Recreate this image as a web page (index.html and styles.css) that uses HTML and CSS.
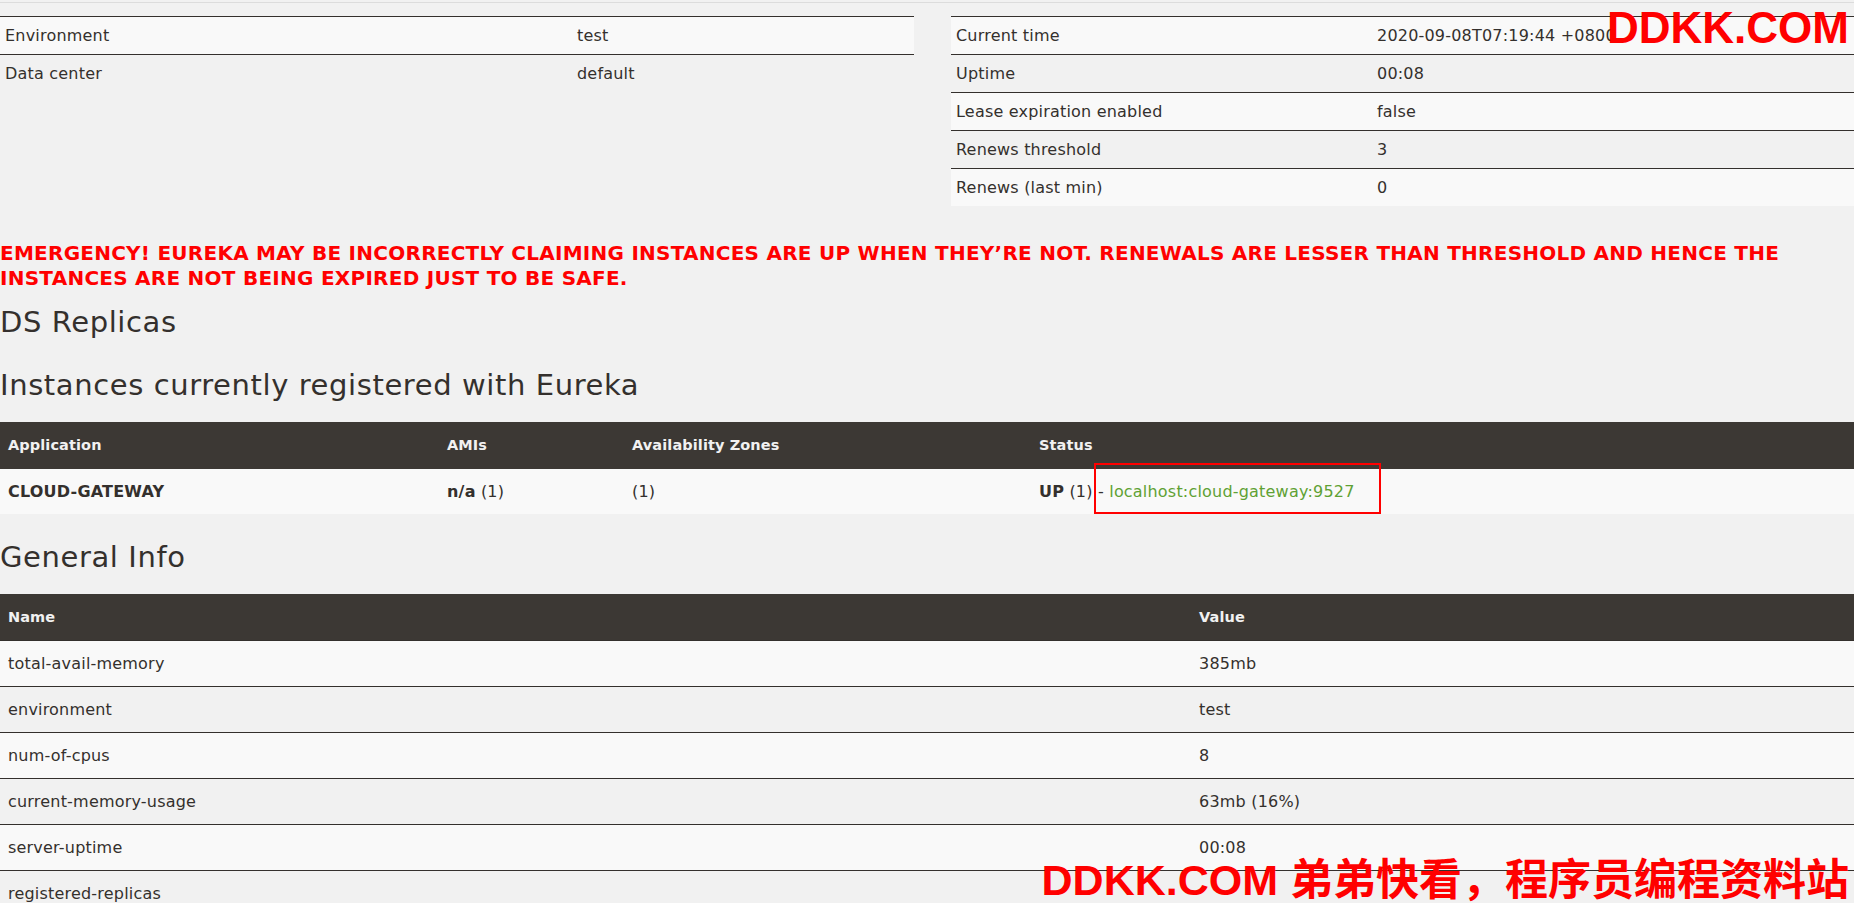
FILE: index.html
```html
<!DOCTYPE html>
<html lang="en">
<head>
<meta charset="utf-8">
<title>Eureka</title>
<link rel="stylesheet" href="styles.css">
</head>
<body>
<div class="page">
  <div class="topline"></div>
  <div class="sys-row">
    <table class="sys sys-left">
      <tr><td>Environment</td><td>test</td></tr>
      <tr><td>Data center</td><td>default</td></tr>
    </table>
    <table class="sys sys-right">
      <tr><td>Current time</td><td>2020-09-08T07:19:44 +0800</td></tr>
      <tr><td>Uptime</td><td>00:08</td></tr>
      <tr><td>Lease expiration enabled</td><td>false</td></tr>
      <tr><td>Renews threshold</td><td>3</td></tr>
      <tr><td>Renews (last min)</td><td>0</td></tr>
    </table>
  </div>

  <h4 class="emergency">EMERGENCY! EUREKA MAY BE INCORRECTLY CLAIMING INSTANCES ARE UP WHEN THEY’RE NOT. RENEWALS ARE LESSER THAN THRESHOLD AND HENCE THE INSTANCES ARE NOT BEING EXPIRED JUST TO BE SAFE.</h4>

  <h1>DS Replicas</h1>
  <ul class="list-group"></ul>

  <h1>Instances currently registered with Eureka</h1>
  <table class="grid instances">
    <thead>
      <tr><th class="c-app">Application</th><th class="c-ami">AMIs</th><th class="c-az">Availability Zones</th><th>Status</th></tr>
    </thead>
    <tbody>
      <tr>
        <td><b>CLOUD-GATEWAY</b></td>
        <td><b>n/a</b> (1)</td>
        <td>(1)</td>
        <td><b>UP</b> (1) - <a href="#" class="inst-link">localhost:cloud-gateway:9527</a></td>
      </tr>
    </tbody>
  </table>

  <h1>General Info</h1>
  <table class="grid general">
    <thead>
      <tr><th class="c-name">Name</th><th>Value</th></tr>
    </thead>
    <tbody>
      <tr><td>total-avail-memory</td><td>385mb</td></tr>
      <tr><td>environment</td><td>test</td></tr>
      <tr><td>num-of-cpus</td><td>8</td></tr>
      <tr><td>current-memory-usage</td><td>63mb (16%)</td></tr>
      <tr><td>server-uptime</td><td>00:08</td></tr>
      <tr><td>registered-replicas</td><td></td></tr>
    </tbody>
  </table>
</div>

<div class="annot-box"></div>
<div class="wm wm-top">DDKK.COM</div>
<div class="wm wm-bottom">DDKK.COM 弟弟快看，程序员编程资料站</div>
</body>
</html>
```

FILE: styles.css
```css
html, body {
  margin: 0;
  padding: 0;
  height: 100%;
  overflow: hidden;
}

body {
  background: #f1f1f1;
  color: #34302d;
  font-family: "DejaVu Sans", "Noto Sans", sans-serif;
  font-size: 16px;
  letter-spacing: 0.2px;
}

.page {
  display: flex;
  flex-direction: column;
}

.topline {
  height: 2px;
  border-bottom: 1px solid #dcdcdc;
  margin-bottom: 13px;
}

.sys-row {
  display: grid;
  grid-template-columns: 914px 1fr;
  column-gap: 37px;
  align-items: start;
}

table {
  border-collapse: separate;
  border-spacing: 0;
  table-layout: fixed;
  width: 100%;
}

.sys td {
  border-top: 1px solid #34302d;
  padding: 5px;
  line-height: 27px;
  vertical-align: middle;
}

.sys tr:nth-child(odd) td {
  background: #f9f9f9;
}

.sys-left td:first-child {
  width: 562px;
}

.sys-right td:first-child {
  width: 411px;
}

.emergency {
  margin: 35px 0 15px;
  color: #ff0000;
  font-size: 20px;
  font-weight: bold;
  line-height: 25px;
  letter-spacing: 0.25px;
}

h1 {
  margin: 0 0 21px;
  font-size: 29px;
  font-weight: normal;
  line-height: 32px;
  letter-spacing: 0.6px;
  color: #34302d;
}

.list-group {
  margin: 0 0 10px;
  padding: 0;
  list-style: none;
}

.grid {
  margin-bottom: 27px;
}

.grid th {
  background: #3c3834;
  color: #f1f1f1;
  font-size: 14.5px;
  font-weight: bold;
  text-align: left;
  padding: 10px 8px;
  line-height: 26px;
  letter-spacing: 0.1px;
}

.grid td {
  border-top: 1px solid #34302d;
  padding: 9px 8px;
  line-height: 27px;
}

.grid tbody tr:nth-child(odd) td {
  background: #f9f9f9;
}

.instances td {
  border-top-color: #3c3834;
}

.c-app { width: 423px; }
.c-ami { width: 169px; }
.c-az { width: 391px; }
.c-name { width: 1175px; }

.inst-link {
  color: #5fa134;
  text-decoration: none;
}

.annot-box {
  position: absolute;
  left: 1094px;
  top: 463px;
  width: 287px;
  height: 51px;
  box-sizing: border-box;
  border: 2px solid #ff0000;
}

.wm {
  position: absolute;
  right: 5px;
  color: #ff0000;
  font-family: "Liberation Sans", "Noto Sans CJK SC", sans-serif;
  font-weight: bold;
  line-height: 44px;
  letter-spacing: 0;
  white-space: nowrap;
}

.wm-top {
  top: 6px;
  font-size: 44px;
}

.wm-bottom {
  top: 858px;
  font-size: 43px;
}
```
